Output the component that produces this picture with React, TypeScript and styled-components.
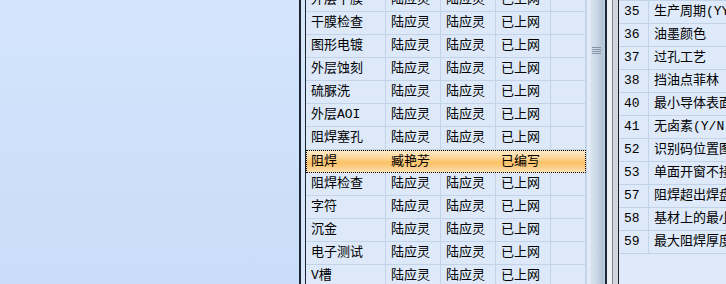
import React from "react";
import styled, { createGlobalStyle, css } from "styled-components";

const Global = createGlobalStyle`
  html, body { margin: 0; padding: 0; }
  body { width: 726px; height: 284px; overflow: hidden; background: #cfe1fa; }
`;

const Root = styled.div`
  display: flex;
  width: 726px;
  height: 284px;
  overflow: hidden;
  font-family: "Liberation Mono", "Noto Sans CJK SC", monospace;
  font-size: 13px;
  color: #000;
`;

const Sidebar = styled.div`
  width: 299px;
  flex: none;
  background: linear-gradient(to bottom, #d4e5fb 0%, #cde0fa 60%, #c9ddfa 100%);
`;

const FrameEdge = styled.div`
  width: 7px;
  flex: none;
  box-sizing: border-box;
  border-left: 2px solid #1b2433;
  border-right: 1px solid #1b2433;
  background: #d6e5f7;
`;

const GridPane = styled.div`
  width: 280px;
  flex: none;
  overflow: hidden;
  background: #dde9f9;
  border-right: 1px solid #c3d3e8;
`;

const Rows = styled.div`
  margin-top: -11px;
`;

const Row = styled.div<{ $selected?: boolean }>`
  display: grid;
  grid-template-columns: 80px 55px 55px 55px 35px;
  height: 23px;
  box-sizing: border-box;
  border-bottom: 1px solid #c3d3e8;
  ${(p) =>
    p.$selected &&
    css`
      border: 1px dotted #000;
      background: linear-gradient(
        to bottom,
        #fde9c7 0%,
        #fcd89c 30%,
        #fbc266 55%,
        #fcd08a 80%,
        #fde2b6 100%
      );
    `}
`;

const Cell = styled.div<{ $selected?: boolean }>`
  box-sizing: border-box;
  border-right: 1px solid ${(p) => (p.$selected ? "transparent" : "#c3d3e8")};
  padding-left: ${(p) => (p.$selected ? 4 : 5)}px;
  line-height: 22px;
  white-space: nowrap;
  overflow: hidden;
`;

const ScrollArea = styled.div`
  width: 18px;
  flex: none;
  display: flex;
  background: #e2ecf9;
`;

const ScrollGap = styled.div`
  width: 3px;
  flex: none;
`;

const Thumb = styled.div`
  flex: 1;
  position: relative;
  background: linear-gradient(to right, #dce6f2 0%, #c9d6e6 45%, #b2c2d6 85%, #c1cfe1 100%);
`;

const Grip = styled.div`
  position: absolute;
  left: 2px;
  top: 47px;
  width: 9px;
  height: 7px;
  background: repeating-linear-gradient(
    to bottom,
    #8593a6 0px,
    #8593a6 1px,
    transparent 1px,
    transparent 2px
  );
`;

const Splitter = styled.div`
  width: 14px;
  flex: none;
  display: flex;
`;

const SplitLine = styled.div<{ $w: number; $c: string }>`
  width: ${(p) => p.$w}px;
  flex: none;
  background: ${(p) => p.$c};
`;

const RightPane = styled.div`
  flex: 1;
  overflow: hidden;
  background: #dee9f9;
  border-top: 1px solid #c3d3e8;
`;

const RRow = styled.div`
  display: grid;
  grid-template-columns: 30px 200px;
  height: 23px;
  box-sizing: border-box;
  border-bottom: 1px solid #c3d3e8;
`;

const RCell = styled.div`
  box-sizing: border-box;
  border-right: 1px solid #c3d3e8;
  padding-left: 5px;
  line-height: 22px;
  white-space: nowrap;
  overflow: hidden;
`;

type R = { step: string; a: string; b: string; s: string; sel?: boolean };

const rows: R[] = [
  { step: "外层干膜", a: "陆应灵", b: "陆应灵", s: "已上网" },
  { step: "干膜检查", a: "陆应灵", b: "陆应灵", s: "已上网" },
  { step: "图形电镀", a: "陆应灵", b: "陆应灵", s: "已上网" },
  { step: "外层蚀刻", a: "陆应灵", b: "陆应灵", s: "已上网" },
  { step: "硫脲洗", a: "陆应灵", b: "陆应灵", s: "已上网" },
  { step: "外层AOI", a: "陆应灵", b: "陆应灵", s: "已上网" },
  { step: "阻焊塞孔", a: "陆应灵", b: "陆应灵", s: "已上网" },
  { step: "阻焊", a: "臧艳芳", b: "", s: "已编写", sel: true },
  { step: "阻焊检查", a: "陆应灵", b: "陆应灵", s: "已上网" },
  { step: "字符", a: "陆应灵", b: "陆应灵", s: "已上网" },
  { step: "沉金", a: "陆应灵", b: "陆应灵", s: "已上网" },
  { step: "电子测试", a: "陆应灵", b: "陆应灵", s: "已上网" },
  { step: "V槽", a: "陆应灵", b: "陆应灵", s: "已上网" },
];

const params: [string, string][] = [
  ["35", "生产周期(YYWW)"],
  ["36", "油墨颜色"],
  ["37", "过孔工艺"],
  ["38", "挡油点菲林"],
  ["40", "最小导体表面"],
  ["41", "无卤素(Y/N)"],
  ["52", "识别码位置图"],
  ["53", "单面开窗不接"],
  ["57", "阻焊超出焊盘"],
  ["58", "基材上的最小"],
  ["59", "最大阻焊厚度"],
];

export default function App() {
  return (
    <>
      <Global />
      <Root>
        <Sidebar />
        <FrameEdge />
        <GridPane>
          <Rows>
            {rows.map((r, i) => (
              <Row key={i} $selected={r.sel}>
                <Cell $selected={r.sel}>{r.step}</Cell>
                <Cell $selected={r.sel}>{r.a}</Cell>
                <Cell $selected={r.sel}>{r.b}</Cell>
                <Cell $selected={r.sel}>{r.s}</Cell>
                <Cell $selected={r.sel} />
              </Row>
            ))}
          </Rows>
        </GridPane>
        <ScrollArea>
          <ScrollGap />
          <Thumb>
            <Grip />
          </Thumb>
        </ScrollArea>
        <Splitter>
          <SplitLine $w={2} $c="#1e2838" />
          <SplitLine $w={5} $c="#eef0f3" />
          <SplitLine $w={1} $c="#7d8591" />
          <SplitLine $w={5} $c="#d3d7dd" />
          <SplitLine $w={1} $c="#1b1f26" />
        </Splitter>
        <RightPane>
          {params.map(([n, t]) => (
            <RRow key={n}>
              <RCell>{n}</RCell>
              <RCell>{t}</RCell>
            </RRow>
          ))}
        </RightPane>
      </Root>
    </>
  );
}
